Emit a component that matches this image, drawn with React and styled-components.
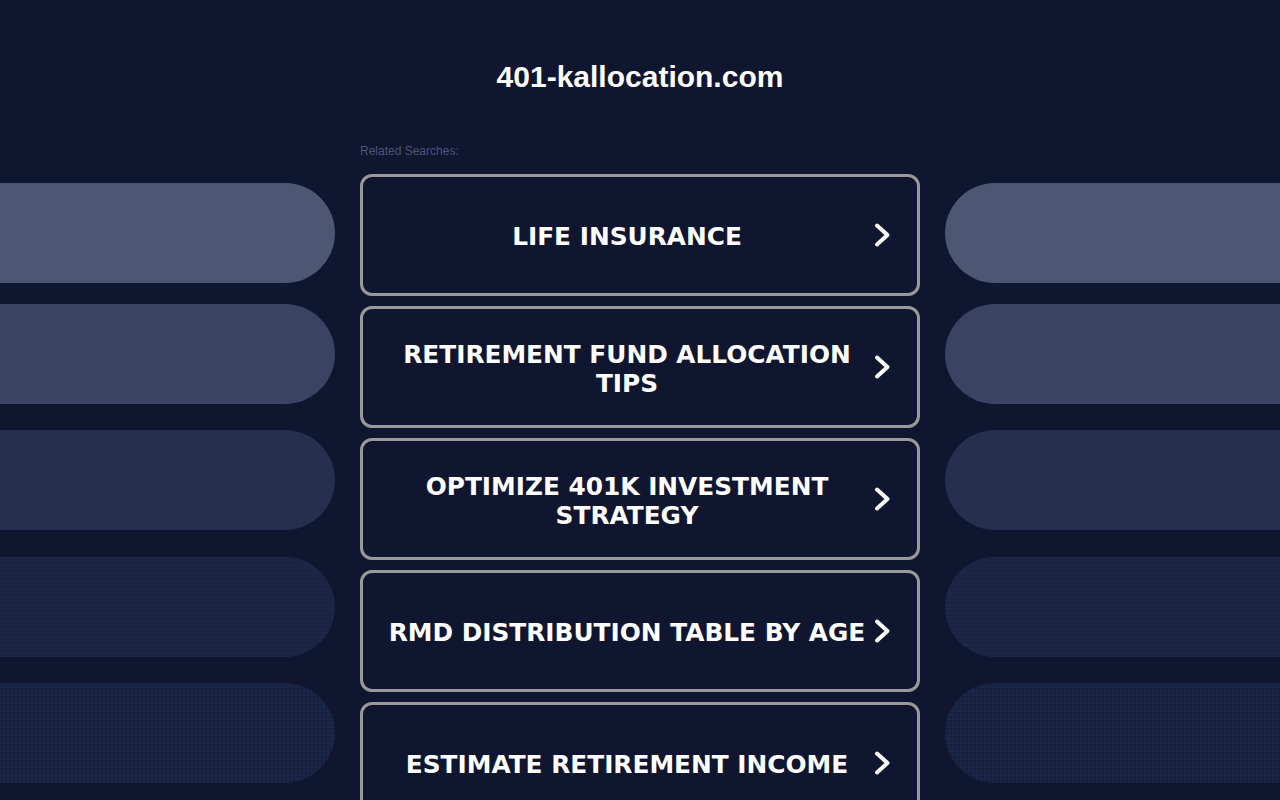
import React from "react";
import styled, { createGlobalStyle } from "styled-components";

const Global = createGlobalStyle`
  html, body { margin: 0; padding: 0; background: #101630; }
  body { font-family: "Liberation Sans", Arial, sans-serif; overflow: hidden; }
`;

const Page = styled.div`
  display: grid;
  grid-template-columns: 335px 560px 335px;
  column-gap: 25px;
  width: 1280px;
  height: 800px;
  overflow: hidden;
  background: #101630;
`;

const Side = styled.div`
  display: flex;
  flex-direction: column;
  padding-top: 183px;
`;

const Pill = styled.div`
  height: 100px;
  margin-top: ${(p) => p.$mt}px;
  background-color: ${(p) => p.$bg};
  border-radius: ${(p) => (p.$side === "left" ? "0 50px 50px 0" : "50px 0 0 50px")};
  ${(p) =>
    p.$dots
      ? `background-image: radial-gradient(rgba(12,18,40,${p.$dots}) 0.6px, transparent 1px);
         background-size: 4px 4px;`
      : ""}
`;

const Center = styled.main`
  display: flex;
  flex-direction: column;
  padding-top: 59px;
`;

const Title = styled.h1`
  margin: 0;
  font-family: "Liberation Sans", Arial, sans-serif;
  font-weight: 700;
  font-size: 30px;
  line-height: 36px;
  color: #ffffff;
  text-align: center;
`;

const Related = styled.div`
  margin-top: 49px;
  font-family: "Liberation Sans", Arial, sans-serif;
  font-size: 12px;
  line-height: 14px;
  color: #4a5577;
`;

const List = styled.div`
  display: flex;
  flex-direction: column;
  gap: 10px;
  margin-top: 16px;
`;

const Button = styled.a`
  display: flex;
  align-items: center;
  box-sizing: border-box;
  height: 122px;
  padding: 0 26px 0 23px;
  border: 3px solid #999999;
  border-radius: 12px;
  background: #101630;
  text-decoration: none;
  cursor: pointer;
`;

const Label = styled.span`
  flex: 1;
  margin-top: 3px;
  text-align: center;
  font-family: "DejaVu Sans", Verdana, sans-serif;
  font-weight: 700;
  font-size: 24.8px;
  line-height: 29px;
  color: #ffffff;
  text-transform: uppercase;
`;

const Chevron = styled.svg`
  flex: none;
  width: 17px;
  height: 26px;
  margin-left: 6px;
`;

const pills = [
  { mt: 0, bg: "#4d5773" },
  { mt: 21, bg: "#3a4361" },
  { mt: 26, bg: "#262f4e" },
  { mt: 27, bg: "#1d2647", dots: 0.3 },
  { mt: 26, bg: "#1b2546", dots: 0.5 },
];

const items = [
  "Life Insurance",
  "Retirement Fund Allocation Tips",
  "Optimize 401k Investment Strategy",
  "RMD Distribution Table by Age",
  "Estimate Retirement Income",
];

function Arrow() {
  return (
    <Chevron viewBox="0 0 17 26">
      <polyline
        points="3,3.5 13.5,13 3,22.5"
        fill="none"
        stroke="#ffffff"
        strokeWidth="4"
        strokeLinecap="round"
        strokeLinejoin="round"
      />
    </Chevron>
  );
}

export default function App() {
  return (
    <>
      <Global />
      <Page>
        <Side>
          {pills.map((p, i) => (
            <Pill key={i} $side="left" $mt={p.mt} $bg={p.bg} $dots={p.dots} />
          ))}
        </Side>
        <Center>
          <Title>401-kallocation.com</Title>
          <Related>Related Searches:</Related>
          <List>
            {items.map((t) => (
              <Button key={t}>
                <Label>{t}</Label>
                <Arrow />
              </Button>
            ))}
          </List>
        </Center>
        <Side>
          {pills.map((p, i) => (
            <Pill key={i} $side="right" $mt={p.mt} $bg={p.bg} $dots={p.dots} />
          ))}
        </Side>
      </Page>
    </>
  );
}
